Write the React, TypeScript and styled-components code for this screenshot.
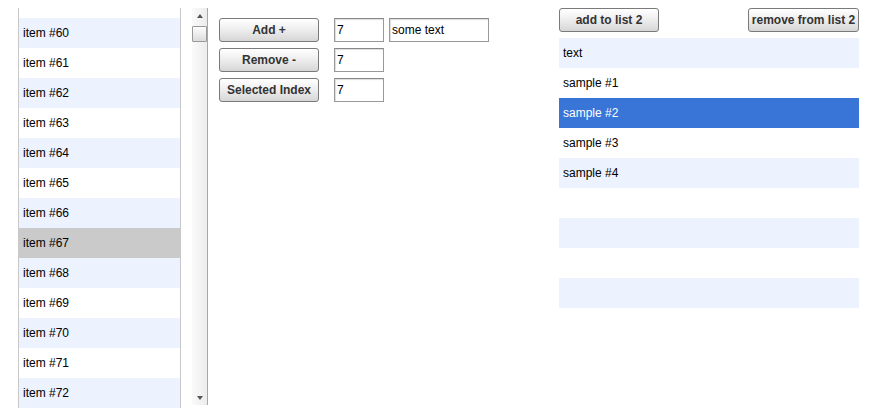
import React from 'react';
import styled, { createGlobalStyle } from 'styled-components';

const GlobalStyle = createGlobalStyle`
  body {
    margin: 0;
    background: #fff;
    font-family: "Liberation Sans", Arial, sans-serif;
    font-size: 12px;
    color: #000;
  }
`;

const Page = styled.div`
  display: flex;
  align-items: flex-start;
  padding: 8px 0 0 18px;
  height: 410px;
  box-sizing: border-box;
  overflow: hidden;
`;

const ListBox = styled.div`
  width: 161px;
  height: 400px;
  border-left: 1px solid #c8c8c8;
  border-right: 1px solid #c8c8c8;
  overflow: hidden;
`;

// the list is scrolled so that only the last 10px of the previous (white) row shows
const ListInner = styled.div`
  padding-top: 10px;
`;

const Row = styled.div<{ $alt?: boolean; $selected?: 'grey' | 'blue' }>`
  height: 30px;
  line-height: 30px;
  padding-left: 4px;
  white-space: nowrap;
  background: ${(p) =>
    p.$selected === 'grey' ? '#cacaca' : p.$selected === 'blue' ? '#3875d7' : p.$alt ? '#ecf2fe' : '#fff'};
  color: ${(p) => (p.$selected === 'blue' ? '#fff' : '#000')};
`;

const ScrollBar = styled.div`
  margin-left: 11px;
  width: 15px;
  height: 397px;
  border-right: 1px solid #a8a8a8;
  background: linear-gradient(to right, #fafafa, #ececec);
  display: flex;
  flex-direction: column;
  align-items: center;
`;

const Arrow = styled.div<{ $down?: boolean }>`
  width: 0;
  height: 0;
  border-left: 3px solid transparent;
  border-right: 3px solid transparent;
  ${(p) => (p.$down ? 'border-top: 4px solid #555;' : 'border-bottom: 4px solid #555;')}
  margin: ${(p) => (p.$down ? 'auto 0 5px' : '6px 0 8px')};
`;

const Thumb = styled.div`
  width: 13px;
  height: 14px;
  border: 1px solid #999;
  border-radius: 1px;
  background: linear-gradient(to bottom, #fdfdfd, #dcdcdc);
  box-sizing: content-box;
`;

const Controls = styled.div`
  margin-left: 11px;
  width: 340px;
  padding-top: 10px;
  display: grid;
  grid-template-columns: 115px 55px 100px;
  row-gap: 6px;
  align-items: center;
  justify-items: start;
`;

const Button = styled.button<{ $width?: number }>`
  width: ${(p) => p.$width ?? 100}px;
  height: 24px;
  padding: 0 2px;
  border: 1px solid #7a7a7a;
  border-radius: 3px;
  background: linear-gradient(to bottom, #ffffff 0%, #ededed 50%, #d6d6d6 100%);
  font-family: "Liberation Sans", Arial, sans-serif;
  font-size: 12px;
  font-weight: bold;
  color: #333;
  white-space: nowrap;
  box-sizing: border-box;
`;

const Input = styled.input<{ $width?: number }>`
  width: ${(p) => p.$width ?? 50}px;
  height: 24px;
  box-sizing: border-box;
  border: 1px solid #999;
  border-top-color: #888;
  box-shadow: inset 1px 1px 1px #ddd;
  padding: 0 2px;
  font-family: "Liberation Sans", Arial, sans-serif;
  font-size: 12px;
  color: #000;
  outline: none;
`;

const RightPane = styled.div`
  width: 300px;
  display: flex;
  flex-direction: column;
`;

const ButtonBar = styled.div`
  display: flex;
  justify-content: space-between;
  margin-bottom: 6px;
`;

const leftItems = Array.from({ length: 13 }, (_, i) => 60 + i);
const rightItems = ['text', 'sample #1', 'sample #2', 'sample #3', 'sample #4', '', '', '', ''];

export default function App() {
  return (
    <>
      <GlobalStyle />
      <Page>
        <ListBox>
          <ListInner>
            {leftItems.map((n) => (
              <Row key={n} $alt={n % 2 === 0} $selected={n === 67 ? 'grey' : undefined}>
                item #{n}
              </Row>
            ))}
          </ListInner>
        </ListBox>
        <ScrollBar>
          <Arrow />
          <Thumb />
          <Arrow $down />
        </ScrollBar>
        <Controls>
          <Button>Add +</Button>
          <Input defaultValue="7" />
          <Input $width={100} defaultValue="some text" />
          <Button>Remove -</Button>
          <Input defaultValue="7" />
          <div />
          <Button>Selected Index</Button>
          <Input defaultValue="7" />
          <div />
        </Controls>
        <RightPane>
          <ButtonBar>
            <Button>add to list 2</Button>
            <Button $width={111}>remove from list 2</Button>
          </ButtonBar>
          {rightItems.map((t, i) => (
            <Row key={i} $alt={i % 2 === 0} $selected={i === 2 ? 'blue' : undefined}>
              {t}
            </Row>
          ))}
        </RightPane>
      </Page>
    </>
  );
}
